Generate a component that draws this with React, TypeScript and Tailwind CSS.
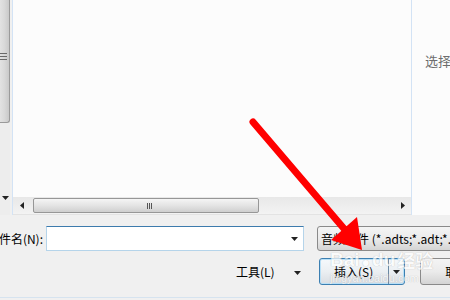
import React from 'react';

const Tri: React.FC<{ dir: 'down' | 'left' | 'right'; className?: string }> = ({ dir, className }) => {
  const pts = dir === 'down' ? '0,0 7,0 3.5,4' : dir === 'left' ? '4,0 4,7 0,3.5' : '0,0 0,7 4,3.5';
  const w = dir === 'down' ? 7 : 4;
  const h = dir === 'down' ? 4 : 7;
  return (
    <svg width={w} height={h} viewBox={`0 0 ${w} ${h}`} className={className}>
      <polygon points={pts} fill="#222" />
    </svg>
  );
};

const btn = 'rounded-[3px] border border-[#8a8a8a] bg-gradient-to-b from-[#f4f4f4] via-[#ebebeb] to-[#d4d4d4]';

export default function App() {
  return (
    <div className="relative w-[450px] h-[300px] overflow-hidden bg-[#f0f0f0] text-[12px] text-black font-['Microsoft_YaHei','Noto_Sans_CJK_SC',sans-serif]">
      {/* browser panes */}
      <div className="flex h-[215px]">
        {/* nav pane scrollbar, cut off */}
        <div className="w-[10px] shrink-0 flex flex-col bg-[#ededed]">
          <div className="h-[123px] rounded-br-[3px] border-r border-b border-[#9a9a9a] bg-gradient-to-r from-[#e2e2e2] via-[#d8d8d8] to-[#c9c9c9] pt-[53px]">
            <div className="flex flex-col gap-[2px] w-[7px]">
              <div className="h-px bg-[#6a6a6a]" />
              <div className="h-px bg-[#6a6a6a]" />
              <div className="h-px bg-[#6a6a6a]" />
            </div>
          </div>
          <div className="flex-1" />
          <div className="h-[24px] pl-[2px] pb-[10px] flex items-center">
            <Tri dir="down" />
          </div>
        </div>
        <div className="w-[2px] shrink-0" />
        <div className="w-px shrink-0 bg-[#d3e3f5]" />

        {/* file list */}
        <div className="w-[398px] shrink-0 flex flex-col bg-[#fcfcfc]">
          <div className="flex-1" />
          <div className="h-[17px] flex items-center bg-gradient-to-b from-[#e8e8e8] to-[#f3f3f3]">
            <div className="w-[17px] flex justify-center">
              <Tri dir="left" />
            </div>
            <div className="ml-[3px] w-[226px] h-[15px] rounded-[2px] border border-[#979797] bg-gradient-to-b from-[#f5f5f5] via-[#e4e4e4] to-[#cfcfcf] flex justify-center items-center">
              <div className="flex gap-[1px] ml-[6px]">
                <div className="w-px h-[6px] bg-[#555]" />
                <div className="w-px h-[6px] bg-[#555]" />
                <div className="w-px h-[6px] bg-[#555]" />
              </div>
            </div>
            <div className="flex-1" />
            <div className="w-[17px] flex justify-center">
              <Tri dir="right" />
            </div>
          </div>
          <div className="h-px bg-[#e3e3e3]" />
        </div>
        <div className="w-px shrink-0 bg-[#d3e3f5]" />

        {/* preview pane */}
        <div className="flex-1 min-w-0 overflow-hidden bg-[#fcfcfc] pt-[51px] pl-[13px] whitespace-nowrap text-[13px] text-[#6d6d6d]">
          选择要预览的文件。
        </div>
      </div>

      {/* file name row */}
      <div className="mt-[11px] flex items-center h-[25px]">
        <div className="w-[43px] shrink-0 overflow-hidden flex justify-end whitespace-nowrap">
          <span>文件名(N):</span>
        </div>
        <div className="ml-[3px] w-[258px] shrink-0 h-[25px] bg-white border border-[#b5d4ea] border-t-[#3d7bad] flex items-center justify-end pr-[5px]">
          <Tri dir="down" />
        </div>
        <div className={`ml-[13px] w-[160px] shrink-0 h-[25px] pl-[3px] flex items-center whitespace-nowrap ${btn}`}>
          音频文件 (*.adts;*.adt;*.aac;*.m4a)
        </div>
      </div>

      {/* buttons row */}
      <div className="mt-[7px] flex items-center h-[27px] pl-[236px]">
        <span className="whitespace-nowrap">工具(L)</span>
        <Tri dir="down" className="ml-[19px] mt-[2px] shrink-0" />
        <div className="ml-[18px] w-[86px] shrink-0 h-[27px] flex rounded-[3px] border border-[#3c7fb1] bg-gradient-to-b from-[#f5f9fc] via-[#ebeff2] to-[#d8dde2] shadow-[inset_0_0_0_1px_#b8e0f7]">
          <div className="w-[69px] flex items-center justify-center border-r border-[#6a8aa4]">插入(S)</div>
          <div className="flex-1 flex items-center justify-center">
            <Tri dir="down" />
          </div>
        </div>
        <div className={`ml-[15px] w-[75px] shrink-0 h-[27px] flex items-center justify-center ${btn}`}>
          取消
        </div>
      </div>
      <div className="mt-[12px] h-px bg-[#d6e3ef]" />

      {/* watermark */}
      <div className="absolute left-[330px] top-[250px] flex flex-col items-start text-white pointer-events-none [text-shadow:0_0_1px_#9a9a9a] opacity-70">
        <div className="flex items-end text-[19px] leading-none font-bold font-['Liberation_Sans',sans-serif]">
          <span>Bai</span>
          <span className="mx-[2px] text-[14px]">●</span>
          <span>du</span>
          <span className="ml-[2px] font-['Noto_Sans_CJK_SC',sans-serif] text-[18px]">经验</span>
        </div>
        <div className="mt-[4px] text-[11px] leading-none font-['Liberation_Sans',sans-serif]">jingyan.baidu.com</div>
      </div>

      {/* red annotation arrow */}
      <svg className="absolute inset-0 pointer-events-none" width="450" height="300" viewBox="0 0 450 300">
        <line x1="253" y1="122" x2="346" y2="231" stroke="#ff0000" strokeWidth="7" strokeLinecap="round" />
        <polygon points="331,240 357,217 362,250" fill="#ff0000" />
      </svg>
    </div>
  );
}
